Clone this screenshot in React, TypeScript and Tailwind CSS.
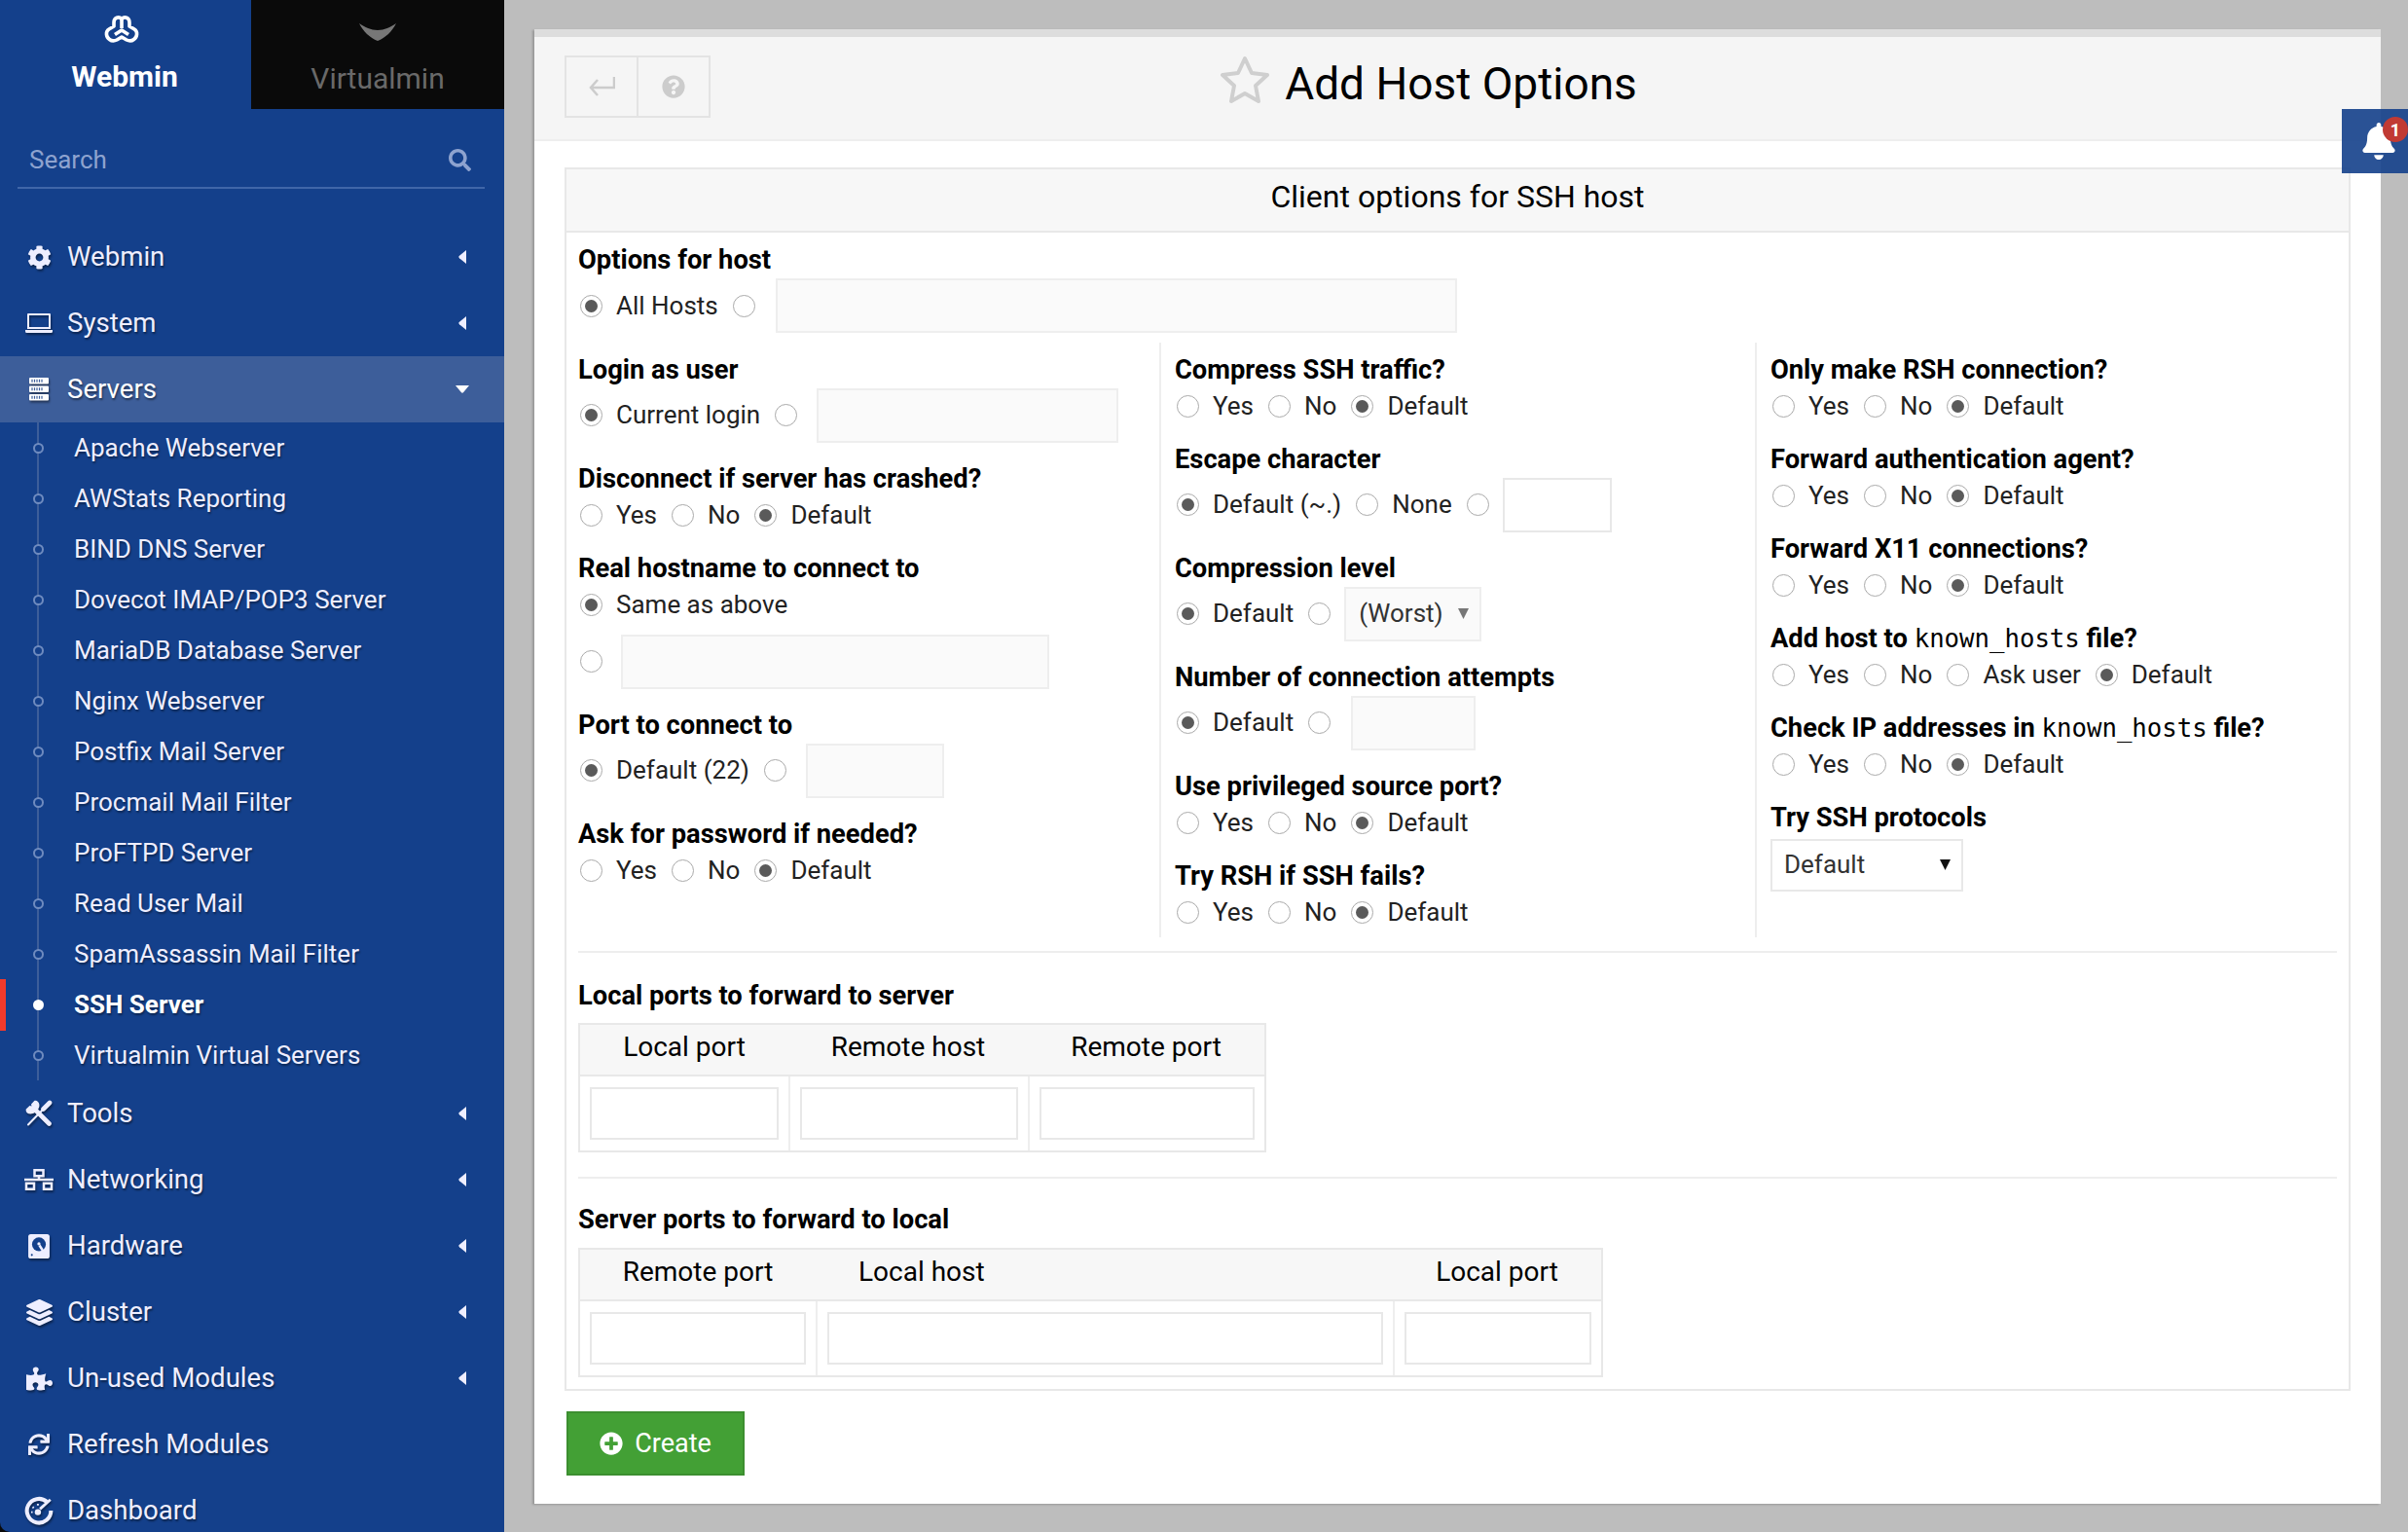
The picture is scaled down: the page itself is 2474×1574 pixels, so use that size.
import React from 'react';
import { FaCog, FaLayerGroup, FaPuzzlePiece, FaSync, FaSearch, FaQuestionCircle, FaPlusCircle, FaBell } from 'react-icons/fa';

const shadow = 'drop-shadow-[1px_2px_1px_rgba(0,0,0,0.45)]';

const LaptopIcon = () => (
  <svg viewBox="0 0 28 20" className={`w-[28px] h-[20px] ${shadow}`} fill="currentColor">
    <path fillRule="evenodd" d="M3 0h22a1 1 0 0 1 1 1v15H2V1a1 1 0 0 1 1-1zm1 2v12h20V2zM0 17h28v1.5a1.5 1.5 0 0 1-1.5 1.5h-25A1.5 1.5 0 0 1 0 18.5z" />
  </svg>
);

const ServerIcon = () => (
  <svg viewBox="0 0 20 24" className={`w-[20px] h-[24px] ${shadow}`}>
    {[0, 8.5, 17].map((y) => (
      <g key={y}>
        <rect x="0" y={y} width="20" height="6.5" rx="1" fill="currentColor" />
        <path d={`M3 ${y + 1.8}v3M5.5 ${y + 1.8}v3M8 ${y + 1.8}v3M10.5 ${y + 1.8}v3M13 ${y + 1.8}v3`} stroke="#3e5f9b" strokeWidth="1.2" />
      </g>
    ))}
  </svg>
);

const ToolsIcon = () => (
  <svg viewBox="0 0 28 28" className={`w-[28px] h-[28px] ${shadow}`} fill="none" stroke="currentColor" strokeLinecap="round">
    <path d="M9.5 0.8L6 4.5L6.5 6.5L4.5 6L0.8 9.5C-0.2 13 3.5 15.5 8 14L12 12L14 8C15.500 4 13 0.5 9.5 0.8Z" fill="currentColor" stroke="none" />
    <path d="M10 10L24.500 24.500" strokeWidth="4.600" />
    <path d="M25 3L18.500 9.500" strokeWidth="4.600" />
    <path d="M18.500 9.500L3 25.500" strokeWidth="2" />
  </svg>
);

const NetworkIcon = () => (
  <svg viewBox="0 0 30 22" className={`w-[30px] h-[22px] ${shadow}`} fill="none" stroke="currentColor" strokeWidth="2.5">
    <rect x="10.5" y="1.25" width="9" height="6" />
    <rect x="2" y="14.75" width="8" height="6" />
    <rect x="20" y="14.75" width="8" height="6" />
    <path d="M15 7v4M0 11h30" />
  </svg>
);

const DiskIcon = () => (
  <svg viewBox="0 0 21 24" className={`w-[22px] h-[25px] ${shadow}`}>
    <rect width="21" height="24" rx="2.5" fill="currentColor" />
    <circle cx="10.5" cy="10" r="6.8" fill="#14408b" />
    <circle cx="10.5" cy="9.5" r="1.6" fill="currentColor" />
    <path d="M11 11l4.5 7" stroke="currentColor" strokeWidth="2.4" />
    <circle cx="3.5" cy="20.5" r="1" fill="#14408b" />
  </svg>
);

const GaugeIcon = () => (
  <svg viewBox="0 0 28 28" className={`w-[30px] h-[30px] ${shadow}`} fill="none" stroke="currentColor">
    <path d="M21.5 5.5A11.5 11.5 0 1 0 25.5 14" strokeWidth="3.8" />
    <path d="M25 3.5L15 12.5" strokeWidth="2.6" />
    <circle cx="13" cy="15.5" r="3" fill="currentColor" stroke="none" />
    <path d="M6.5 15.5h1.5M8 10.5l1 1M13 7.5v1.5" strokeWidth="1.8" />
  </svg>
);

const CaretLeft = () => (
  <svg viewBox="0 0 8 14" className="w-[8px] h-[14px]" fill="#eeeeff">
    <path d="M8 0v14L1 8.2a1.6 1.6 0 0 1 0-2.4z" />
  </svg>
);

const CaretDown = () => (
  <svg viewBox="0 0 14 8" className="w-[14px] h-[8px]" fill="#ffffff">
    <path d="M0 0h14L8.2 7a1.6 1.6 0 0 1-2.4 0z" />
  </svg>
);

const topMenu = [
  { label: 'Webmin', icon: <FaCog size={25} className={shadow} /> },
  { label: 'System', icon: <LaptopIcon /> },
];

const bottomMenu = [
  { label: 'Tools', icon: <ToolsIcon />, caret: true },
  { label: 'Networking', icon: <NetworkIcon />, caret: true },
  { label: 'Hardware', icon: <DiskIcon />, caret: true },
  { label: 'Cluster', icon: <FaLayerGroup size={27} className={shadow} />, caret: true },
  { label: 'Un-used Modules', icon: <FaPuzzlePiece size={27} className={shadow} />, caret: true },
  { label: 'Refresh Modules', icon: <FaSync size={22} className={shadow} />, caret: false },
  { label: 'Dashboard', icon: <GaugeIcon />, caret: false },
];

const serverItems = [
  'Apache Webserver',
  'AWStats Reporting',
  'BIND DNS Server',
  'Dovecot IMAP/POP3 Server',
  'MariaDB Database Server',
  'Nginx Webserver',
  'Postfix Mail Server',
  'Procmail Mail Filter',
  'ProFTPD Server',
  'Read User Mail',
  'SpamAssassin Mail Filter',
  'SSH Server',
  'Virtualmin Virtual Servers',
];

const MenuRow = ({ label, icon, caret }: { label: string; icon: React.ReactNode; caret: boolean }) => (
  <div className="h-[68px] flex items-center text-[#eeeeff]">
    <div className="w-[69px] pl-[25px] pr-[14px] flex justify-center shrink-0">{icon}</div>
    <span className="flex-1 text-[27.6px] [text-shadow:1px_2px_2px_rgba(0,0,0,0.45)]">{label}</span>
    {caret && (
      <div className="mr-[39px]">
        <CaretLeft />
      </div>
    )}
  </div>
);

const Sidebar = () => (
  <div className="w-[518px] shrink-0 bg-[#0a0a0a]">
    <div className="h-full bg-[#14408b] rounded-bl-[10px] flex flex-col">
      <div className="flex h-[112px] shrink-0">
        <div className="w-[258px] flex flex-col items-center text-white">
          <svg viewBox="0 0 36 32" className="w-[36px] h-[32px] mt-[15px] -ml-[8px]" fill="none" stroke="currentColor" strokeWidth="3.6" strokeLinejoin="round">
            <path d="M18 4.5C15 1.5 10 3 10 8v4l-5 3C1 17.5 2 23 5.5 25.5 8 27.5 11 27 13 26l5-3 5 3c2 1 5 1.5 7.5-.5C34 23 35 17.5 31 15l-5-3V8c0-5-5-6.5-8-3.5z" />
            <path d="M18 4.5V14M11 20.5l7-4.5 7 4.500" />
          </svg>
          <span className="text-[30px] font-bold leading-[34px] mt-[15px] mr-[2px]">Webmin</span>
        </div>
        <div className="flex-1 bg-[#0a0a0a] flex flex-col items-center text-[#696969]">
          <svg viewBox="0 0 38 18" className="w-[38px] h-[18px] mt-[24px]" fill="#777777">
            <path d="M0 0c6 4 12 7 19 7s13-3 19-7c-4 8-11 15-19 18C11 15 4 8 0 0z" />
          </svg>
          <span className="text-[30px] leading-[34px] mt-[22px]">Virtualmin</span>
        </div>
      </div>
      <div className="ml-[18px] mr-[20px] h-[82px] shrink-0 border-b-2 border-[#4066a8] flex items-center justify-between pl-[12px] pr-[14px] pt-[24px] text-[#8ea3cf]">
        <span className="text-[26px]">Search</span>
        <FaSearch size={23} />
      </div>
      <div className="mt-[36px]">
        {topMenu.map((m) => (
          <MenuRow key={m.label} label={m.label} icon={m.icon} caret />
        ))}
        <div className="h-[68px] bg-[#3d5e9a] flex items-center text-white">
          <div className="w-[69px] pl-[25px] pr-[14px] flex justify-center shrink-0">
            <ServerIcon />
          </div>
          <span className="flex-1 text-[27.6px] [text-shadow:1px_2px_2px_rgba(0,0,0,0.45)]">Servers</span>
          <div className="mr-[36px]">
            <CaretDown />
          </div>
        </div>
        <div className="relative">
          <div className="absolute left-[38px] top-0 bottom-0 w-[2px] bg-[#3d5e9a]" />
          {serverItems.map((item) => {
            const active = item === 'SSH Server';
            return (
              <div key={item} className="relative h-[52px] flex items-center pl-[76px]">
                {active && <div className="absolute left-0 top-0 h-[53px] w-[6px] bg-[#f23a2b]" />}
                <div
                  className={`absolute left-[34px] top-[21px] w-[11px] h-[11px] rounded-full ${
                    active ? 'bg-white' : 'bg-[#14408b] border-2 border-[#6f8bbf]'
                  }`}
                />
                <span
                  className={`text-[26px] [text-shadow:1px_2px_2px_rgba(0,0,0,0.4)] ${
                    active ? 'font-bold text-white' : 'text-[#eeeeff]'
                  }`}
                >
                  {item}
                </span>
              </div>
            );
          })}
        </div>
        {bottomMenu.map((m) => (
          <MenuRow key={m.label} label={m.label} icon={m.icon} caret={m.caret} />
        ))}
      </div>
    </div>
  </div>
);

const Radio = ({ checked }: { checked?: boolean }) => (
  <div className="w-[23px] h-[23px] shrink-0 rounded-full border-[1.5px] border-[#aaaaaa] bg-white flex items-center justify-center">
    {checked && <div className="w-[13px] h-[13px] rounded-full bg-[#5a5a5a]" />}
  </div>
);

type Opt = { label?: string; checked?: boolean };

const Options = ({ opts }: { opts: Opt[] }) => (
  <div className="flex items-center gap-[15px] ml-[2px]">
    {opts.map((o, i) => (
      <div key={i} className="flex items-center gap-[14px]">
        <Radio checked={o.checked} />
        {o.label && <span>{o.label}</span>}
      </div>
    ))}
  </div>
);

const Label = ({ children }: { children: React.ReactNode }) => (
  <div className="h-[37px] flex items-center font-bold text-[27.3px] text-black whitespace-pre">{children}</div>
);

const Row = ({ children }: { children: React.ReactNode }) => <div className="h-[37px] flex items-center">{children}</div>;
const InputRow = ({ children }: { children: React.ReactNode }) => <div className="h-[57px] flex items-start">{children}</div>;

const Text = ({ w, ml, on }: { w: string; ml: string; on?: boolean }) => (
  <div className={`h-[56px] ${w} ${ml} border-2 ${on ? 'bg-white border-[#e8e8e8]' : 'bg-[#fafafa] border-[#eeeeee]'}`} />
);

const yesNo = [{ label: 'Yes' }, { label: 'No' }, { label: 'Default', checked: true }];

const Simple = ({ label, opts, last }: { label: React.ReactNode; opts?: Opt[]; last?: boolean }) => (
  <div className={last ? 'mb-[7px]' : 'mb-[18px]'}>
    <Label>{label}</Label>
    <Row>
      <Options opts={opts ?? yesNo} />
    </Row>
  </div>
);

const Mono = ({ children }: { children: string }) => (
  <span className="font-['DejaVu_Sans_Mono',monospace] font-normal text-[25.7px]">{children}</span>
);

const Arrow = ({ color }: { color: string }) => (
  <svg viewBox="0 0 12 12" className="w-[11px] h-[11px]" fill={color}>
    <path d="M0 0h12L6 12z" />
  </svg>
);

const Cols1 = () => (
  <div className="pt-[10px]">
    <div className="mb-[18px]">
      <Label>Login as user</Label>
      <InputRow>
        <div className="h-[54px] flex items-center">
          <Options opts={[{ label: 'Current login', checked: true }, {}]} />
        </div>
        <Text w="w-[310px]" ml="ml-[20px]" />
      </InputRow>
    </div>
    <Simple label="Disconnect if server has crashed?" />
    <div className="mb-[18px]">
      <Label>Real hostname to connect to</Label>
      <Row>
        <Options opts={[{ label: 'Same as above', checked: true }]} />
      </Row>
      <div className="h-[57px] mt-[12px] flex items-start">
        <div className="h-[54px] flex items-center">
          <Options opts={[{}]} />
        </div>
        <Text w="w-[440px]" ml="ml-[19px]" />
      </div>
    </div>
    <div className="mb-[18px]">
      <Label>Port to connect to</Label>
      <InputRow>
        <div className="h-[54px] flex items-center">
          <Options opts={[{ label: 'Default (22)', checked: true }, {}]} />
        </div>
        <Text w="w-[142px]" ml="ml-[20px]" />
      </InputRow>
    </div>
    <Simple label="Ask for password if needed?" last />
  </div>
);

const Cols2 = () => (
  <div className="pt-[10px] pl-[14px] border-l-2 border-[#eeeeee]">
    <Simple label="Compress SSH traffic?" />
    <div className="mb-[18px]">
      <Label>Escape character</Label>
      <InputRow>
        <div className="h-[54px] flex items-center">
          <Options opts={[{ label: 'Default (~.)', checked: true }, { label: 'None' }, {}]} />
        </div>
        <Text w="w-[112px]" ml="ml-[14px]" on />
      </InputRow>
    </div>
    <div className="mb-[18px]">
      <Label>Compression level</Label>
      <InputRow>
        <div className="h-[54px] flex items-center">
          <Options opts={[{ label: 'Default', checked: true }, {}]} />
        </div>
        <div className="h-[56px] w-[141px] ml-[14px] bg-[#fafafa] border-2 border-[#eeeeee] flex items-center justify-between pl-[13px] pr-[11px] pb-[2px] text-[#333333]">
          <span>(Worst)</span>
          <Arrow color="#777777" />
        </div>
      </InputRow>
    </div>
    <div className="mb-[18px]">
      <Label>Number of connection attempts</Label>
      <InputRow>
        <div className="h-[54px] flex items-center">
          <Options opts={[{ label: 'Default', checked: true }, {}]} />
        </div>
        <Text w="w-[128px]" ml="ml-[21px]" />
      </InputRow>
    </div>
    <Simple label="Use privileged source port?" />
    <Simple label="Try RSH if SSH fails?" last />
  </div>
);

const Cols3 = () => (
  <div className="pt-[10px] pl-[14px] border-l-2 border-[#eeeeee]">
    <Simple label="Only make RSH connection?" />
    <Simple label="Forward authentication agent?" />
    <Simple label="Forward X11 connections?" />
    <Simple
      label={
        <>
          Add host to <Mono>known_hosts</Mono> file?
        </>
      }
      opts={[{ label: 'Yes' }, { label: 'No' }, { label: 'Ask user' }, { label: 'Default', checked: true }]}
    />
    <Simple
      label={
        <>
          Check IP addresses in <Mono>known_hosts</Mono> file?
        </>
      }
    />
    <Label>Try SSH protocols</Label>
    <div className="h-[54px] w-[198px] mt-[3px] bg-white border-2 border-[#e8e8e8] flex items-center justify-between pl-[12px] pr-[11px] pb-[2px] text-[#333333]">
      <span>Default</span>
      <Arrow color="#111111" />
    </div>
  </div>
);

const PortTable = ({ cols, heads }: { cols: string; heads: { label: string; cls: string }[] }) => (
  <div className="border-2 border-[#e8e8e8]">
    <div className={`grid ${cols} h-[53px] pb-[5px] bg-[#f7f7f7] border-b-2 border-[#e8e8e8] items-center`}>
      {heads.map((h) => (
        <div key={h.label} className={`text-black text-[28px] ${h.cls}`}>
          {h.label}
        </div>
      ))}
    </div>
    <div className={`grid ${cols} h-[76px]`}>
      {heads.map((h, i) => (
        <div key={h.label} className={`flex items-center px-[10px] ${i > 0 ? 'border-l-2 border-[#eeeeee]' : ''}`}>
          <div className="w-full h-[54px] border-2 border-[#e8e8e8] bg-white" />
        </div>
      ))}
    </div>
  </div>
);

const App: React.FC = () => {
  return (
    <div className="relative flex h-[1574px] overflow-hidden bg-[#bdbdbd] font-['Roboto',sans-serif] text-[26px] text-[#222222]">
      <Sidebar />

      <div className="flex-1 min-w-0 pl-[31px] pr-[28px] pt-[30px]">
        <div className="h-[1515px] bg-white border-t-[8px] border-[#dddddd] shadow-[-2px_1px_2px_rgba(0,0,0,0.2)]">
          <div className="relative h-[107px] bg-[#f5f5f5] border-b-2 border-[#eeeeee] flex items-center justify-center">
            <div className="absolute left-[31px] top-[19px] flex h-[64px] w-[150px] border-2 border-[#e3e3e3] text-[#cccccc]">
              <div className="w-[74px] border-r-2 border-[#e3e3e3] flex items-center justify-center">
                <svg viewBox="0 0 28 22" className="w-[28px] h-[22px]" fill="none" stroke="currentColor" strokeWidth="2.5">
                  <path d="M27 1v11H3M10 4l-7 8 7 8" />
                </svg>
              </div>
              <div className="flex-1 flex items-center justify-center">
                <FaQuestionCircle size={24} />
              </div>
            </div>
            <div className="flex items-center ml-[-60px] pb-[9px]">
              <svg viewBox="0 0 52 50" className="w-[52px] h-[50px] mr-[15px] mb-[8px]" fill="none" stroke="#cfcfcf" strokeWidth="4" strokeLinejoin="round">
                <path d="M26 3l7 15 16 2-12 11 3 16-14-8-14 8 3-16L3 20l16-2z" />
              </svg>
              <h1 className="text-[46px] text-black leading-none">Add Host Options</h1>
            </div>
          </div>

          <div className="px-[31px] pt-[27px]">
            <div className="border-2 border-[#e8e8e8]">
              <div className="h-[65px] pb-[8px] bg-[#f7f7f7] border-b-2 border-[#e8e8e8] flex items-center justify-center text-[32px] text-black">
                Client options for SSH host
              </div>
              <div className="px-[12px] pb-[12px]">
                <div className="pt-[10px]">
                  <Label>Options for host</Label>
                  <InputRow>
                    <div className="h-[56px] flex items-center">
                      <Options opts={[{ label: 'All Hosts', checked: true }, {}]} />
                    </div>
                    <Text w="w-[700px]" ml="ml-[21px]" />
                  </InputRow>
                </div>
                <div className="mt-[9px] grid grid-cols-[597px_612px_1fr]">
                  <Cols1 />
                  <Cols2 />
                  <Cols3 />
                </div>
                <div className="mt-[14px] border-t-2 border-[#eeeeee] pt-[26px]">
                  <Label>Local ports to forward to server</Label>
                  <div className="mt-[9px] w-[707px]">
                    <PortTable
                      cols="grid-cols-[214px_246px_1fr]"
                      heads={[
                        { label: 'Local port', cls: 'text-center' },
                        { label: 'Remote host', cls: 'text-center' },
                        { label: 'Remote port', cls: 'text-center' },
                      ]}
                    />
                  </div>
                </div>
                <div className="mt-[25px] border-t-2 border-[#eeeeee] pt-[24px]">
                  <Label>Server ports to forward to local</Label>
                  <div className="mt-[10px] w-[1053px]">
                    <PortTable
                      cols="grid-cols-[242px_593px_1fr]"
                      heads={[
                        { label: 'Remote port', cls: 'text-center' },
                        { label: 'Local host', cls: 'pl-[44px]' },
                        { label: 'Local port', cls: 'text-center' },
                      ]}
                    />
                  </div>
                </div>
              </div>
            </div>
            <button className="mt-[21px] ml-[2px] h-[66px] w-[183px] bg-[#43a035] border-2 border-[#3c8f30] text-white flex items-center justify-center gap-[12px]">
              <FaPlusCircle size={24} />
              <span className="text-[27px]">Create</span>
            </button>
          </div>
        </div>
      </div>

      <div className="absolute left-[2406px] top-[112px] w-[68px] h-[66px] bg-[#14408b]/90 text-white">
        <FaBell size={38} className="absolute left-[19px] top-[14px]" />
        <div className="absolute left-[42px] top-[8px] w-[26px] h-[26px] rounded-full bg-[#c13a33] flex items-center justify-center text-[18px] font-bold">
          1
        </div>
      </div>
    </div>
  );
};

export default App;
